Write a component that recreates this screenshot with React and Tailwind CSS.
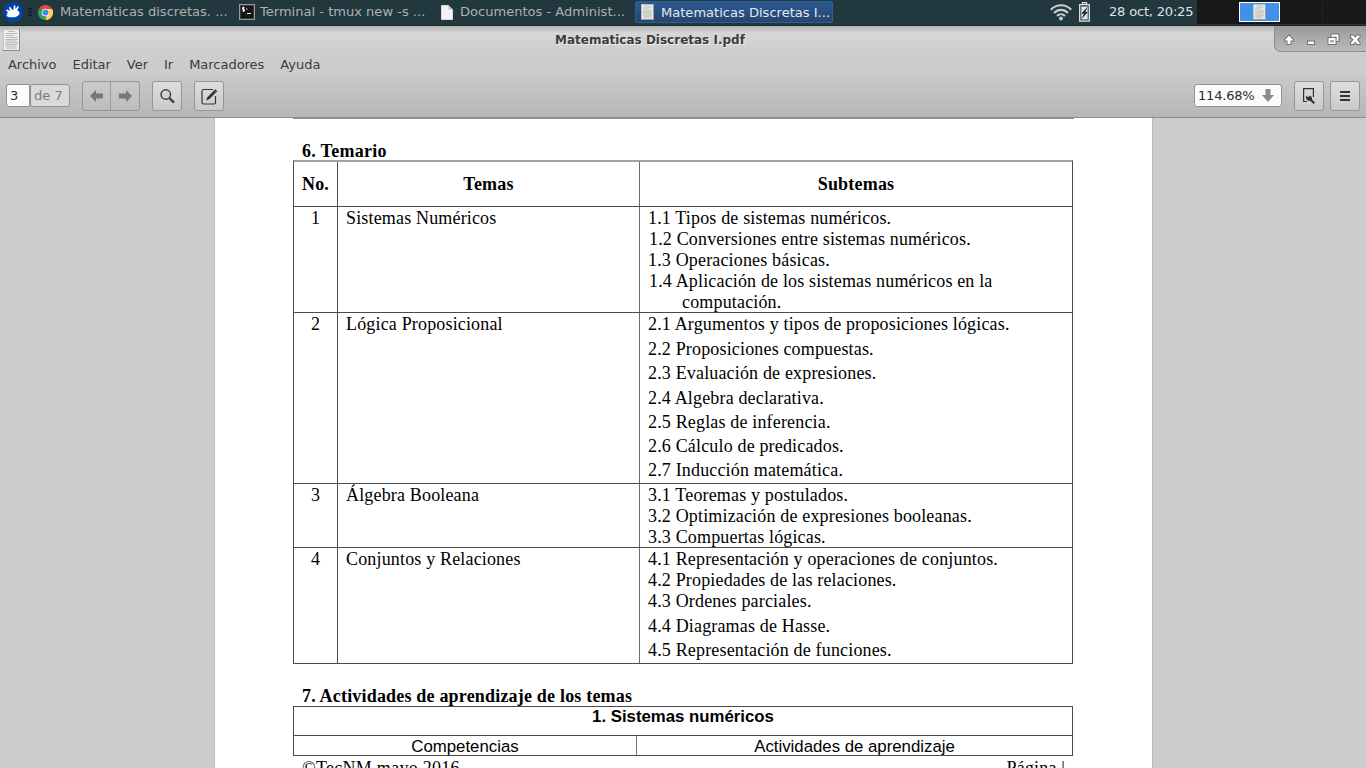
import React from "react";

// Una fila de texto del documento: alto de línea y espaciado propios
const Line = ({ className = "", children }) => (
  <div className={`whitespace-nowrap ${className}`}>{children}</div>
);

const DocIcon = ({ className = "" }) => (
  <svg viewBox="0 0 17 22" className={className} preserveAspectRatio="none">
    <rect x="0.5" y="0.5" width="16" height="21" fill="#ececea" stroke="#c4c4c2" />
    <path d="M16.500 0v21.500H0" fill="none" stroke="#8a8a8a" />
    <g stroke="#b4b4b4" strokeWidth="0.9">
      <path d="M5 2.5h7M3 4.5h11M3 6.5h8M2.500 8.500h12M2.500 10.500h12M2.500 12h11M2.500 13.700h12M2.500 15.400h12M2.500 17h10M3 19h11" />
    </g>
  </svg>
);

const XubuntuIcon = () => (
  <svg viewBox="0 0 20 20" className="ml-[3px] h-5 w-5">
    <circle cx="10" cy="10" r="10" fill="#0044aa" />
    <path
      d="M3.300 8.200C3.500 7.300 4.500 7.500 5.300 8L7.300 9L6 5.800C5.900 4.700 7.100 4.600 7.700 5.600L9.500 8L10.500 7.500L10.700 4C10.900 2.800 12.300 2.900 12.400 4L12.400 7L14.200 4.700C15 3.900 16 4.700 15.500 5.700L14.200 8.200C16 9.200 17.200 10.500 16.300 12.200C15.300 14.200 12 15.500 9 15.300C6.500 15.300 4.500 15 3.600 14C3.200 13 4 12.700 5 12.600C4 12.200 3.600 11.500 4.100 11C4.500 10.700 5.200 10.800 5.600 10.700L4 9.500C3.500 9.100 3.200 8.700 3.300 8.200Z"
      fill="#fff"
    />
  </svg>
);

const ChromeIcon = () => (
  <svg viewBox="0 0 16 16" className="h-[15px] w-[15px]">
    <path d="M8 8L1.070 4A8 8 0 0 1 14.930 4Z" fill="#e24a3b" />
    <path d="M8 8L14.930 4A8 8 0 0 1 8 16Z" fill="#fcd04b" />
    <path d="M8 8L8 16A8 8 0 0 1 1.070 4Z" fill="#2da05a" />
    <path d="M8 4.300h6.930A8 8 0 0 1 8 16l3.200-6.200Z" fill="#fcd04b" />
    <circle cx="8" cy="8" r="4.100" fill="#f4f4f4" />
    <circle cx="8" cy="8" r="3.200" fill="#4a87ee" />
  </svg>
);

const TerminalIcon = () => (
  <svg viewBox="0 0 16 16" className="h-4 w-4">
    <rect x="0.5" y="0.5" width="15" height="15" fill="#151515" stroke="#9a9a98" />
    <rect x="1.5" y="1.500" width="13" height="13" fill="none" stroke="#3b3b3b" />
    <path d="M5.500 3.500H3.500V5.200H5.500V7H3.300M4.500 2.700v5M7 5h1.500M8 9.500h4" stroke="#eee" fill="none" />
  </svg>
);

const FileIcon = () => (
  <svg viewBox="0 0 12 15" className="h-[15px] w-3">
    <path d="M0.500 0.500h7l4 4v10h-11z" fill="#f3f3f3" stroke="#d9d9d9" />
    <path d="M7.500 0.500v4h4z" fill="#bbb" />
  </svg>
);

const WifiIcon = () => (
  <svg viewBox="0 0 22 17" className="h-[17px] w-[22px]" fill="none" stroke="#c9cdcd" strokeWidth="2.100">
    <path d="M0.800 5.700C6.500 -0.300 15.500 -0.300 21.200 5.700" />
    <path d="M4 9C8 4.800 14 4.800 18 9" />
    <path d="M7 12C9.300 9.700 12.700 9.700 15 12" />
    <circle cx="11" cy="14.500" r="1.900" fill="#c9cdcd" stroke="none" />
  </svg>
);

const BatteryIcon = () => (
  <svg viewBox="0 0 11 20" className="h-5 w-[11px]">
    <path d="M3.500 2.500v-2h4v2M0.700 2.700h9.600v16.400H0.700z" fill="none" stroke="#e2e5e5" strokeWidth="1.300" />
    <rect x="2.300" y="4.500" width="6.400" height="13" fill="#dde1e1" />
    <path d="M8.500 5L2 11.800h2.800L2.500 17L9 10H6.500z" fill="#1b3037" />
  </svg>
);

const TASKS = [
  { label: "Matemáticas discretas. ...", width: "w-[201px]", icon: <ChromeIcon />, gap: "gap-[7px]" },
  { label: "Terminal - tmux new -s ...", width: "w-[202px]", icon: <TerminalIcon />, gap: "gap-[5px]" },
  { label: "Documentos - Administ...", width: "w-[194px]", icon: <FileIcon />, gap: "gap-[7px]" },
];

const Panel = () => (
  <header className="flex h-[26px] shrink-0 items-start border-b border-[#17262b] bg-[#22383f] text-[13.050px] text-[#acb1b2]">
    <div className="flex h-6 items-center">
      <XubuntuIcon />
      <div className="mr-[6px] ml-[5px] flex flex-col gap-px">
        <div className="h-[2px] w-1 bg-[#14252b]" />
        <div className="h-[2px] w-1 bg-[#14252b]" />
        <div className="h-[2px] w-1 bg-[#14252b]" />
      </div>
      {TASKS.map((t) => (
        <div key={t.label} className={`flex items-center whitespace-nowrap ${t.width} ${t.gap}`}>
          {t.icon}
          <span>{t.label}</span>
        </div>
      ))}
    </div>
    <div className="mt-px flex h-[22px] w-[198px] items-center gap-[7px] rounded-[2px] border border-[#2d6099] bg-linear-to-b from-[#2b5992] to-[#26466f] pl-[5px] whitespace-nowrap text-[#e3e8ee]">
      <DocIcon className="h-4 w-[13px]" />
      <span className="pt-px">Matematicas Discretas I...</span>
    </div>
    <div className="ml-auto flex h-6 items-center text-[#dfe2e3]">
      <WifiIcon />
      <div className="ml-[7px]"><BatteryIcon /></div>
      <span className="ml-[19px] w-[88px] tracking-[-0.200px] whitespace-nowrap">28 oct, 20:25</span>
      <div className="flex h-6 w-[169px] bg-[#181818] py-[2px] pl-[42px]">
        <div className="flex w-[41px] items-center justify-center border border-white bg-[#3f92e8]">
          <DocIcon className="h-4 w-[13px]" />
        </div>
        <div className="ml-px w-[42px] border-r border-[#222]" />
      </div>
    </div>
  </header>
);

const TitleBar = () => (
  <div className="flex h-[28px] shrink-0 bg-linear-to-b from-[#b3b3b3] via-[#d6d6d6] via-25% to-[#cdcdcd]">
    <div className="w-[650px] pt-[3px] pl-[3px]">
      <DocIcon className="h-[22px] w-[17px]" />
    </div>
    <div className="-ml-[95px] pt-[6px] text-[12px] leading-[16px] font-bold text-[#3c3c3c] [text-shadow:1px_1px_0_#eee]">
      Matematicas Discretas I.pdf
    </div>
    <div className="ml-auto h-[26px] w-[92px] rounded-bl-[7px] border-b border-l border-[#8c8c8c] bg-linear-to-b from-[#9a9a9a] to-[#bababa]">
      <svg viewBox="0 0 91 25" className="h-[25px] w-[91px] [paint-order:stroke]" fill="#fff" stroke="#707070" strokeWidth="2">
        <path d="M14 9.500L18 13.800V14.500H15.500V18H12.500V14.500H10V13.800Z" />
        <path d="M33 15.500h6v2.500h-6z" />
        <path d="M56.500 8.500h7v6.500h-7z" />
        <path d="M58.500 10.500h3v2.500h-3z" fill="#aaa" stroke="none" />
        <path d="M53.500 12h7v6h-7z" />
        <path d="M55 14h4v2.500h-4z" fill="#aaa" stroke="none" />
        <path d="M76 9.500h2.300l1.900 2.200l1.900-2.200H84.500v1.500l-2.600 2.700l2.600 2.800v1.500h-2.400l-1.900-2.200l-1.900 2.200H76v-1.500l2.600-2.800l-2.600-2.700z" />
      </svg>
    </div>
  </div>
);

const ToolButton = ({ children, className = "" }) => (
  <button className={`flex h-[30px] w-[30px] items-center justify-center rounded-[3px] border border-[#969696] bg-linear-to-b from-[#dedede] to-[#cacaca] ${className}`}>
    {children}
  </button>
);

const Arrow = ({ className = "" }) => (
  <svg viewBox="0 0 13 12" className={`h-3 w-[13px] ${className}`} fill="#777">
    <path d="M6 0v3.500h7v5H6V12L0 6z" />
  </svg>
);

const Toolbar = () => (
  <div className="flex h-[43px] shrink-0 items-start border-b border-[#8e8e8e] bg-linear-to-b from-[#cacaca] to-[#b6b6b6] pt-[6px] pr-[6px] pl-[6px] text-[13px]">
    <div className="mt-[3px] h-[23px] w-6 rounded-l-[3px] border border-[#929292] bg-[#fcfcfc] pl-[3px] leading-[22px] text-[#2b2b2b]">3</div>
    <div className="mt-[3px] h-[23px] w-10 rounded-[3px] border border-[#929292] bg-[#dadada] pl-[3px] leading-[22px] text-[#7b7b7b]">de 7</div>
    <div className="ml-3 flex h-[30px] w-[58px] items-center rounded-[3px] border border-[#969696] bg-linear-to-b from-[#cbcbcb] to-[#bcbcbc]">
      <div className="flex h-full w-[28px] items-center justify-center border-r border-[#9c9c9c]"><Arrow /></div>
      <div className="flex flex-1 items-center justify-center"><Arrow className="rotate-180" /></div>
    </div>
    <ToolButton className="ml-3">
      <svg viewBox="0 0 15 15" className="h-[15px] w-[15px]" fill="none" stroke="#3f3f3f">
        <circle cx="5.800" cy="5.500" r="4.700" strokeWidth="1.500" />
        <path d="M9.200 9L14 13.600" strokeWidth="2.400" />
      </svg>
    </ToolButton>
    <ToolButton className="ml-3">
      <svg viewBox="0 0 17 17" className="h-[17px] w-[17px]" fill="none" stroke="#333">
        <path d="M12 1.500H2.500Q1 1.500 1 3V14.500Q1 16 2.500 16H13Q14.500 16 14.500 14.500V8" strokeWidth="1.200" />
        <path d="M5 12.500L6.500 9L13 2.500L15 4.500L8.500 11Z" fill="#333" stroke="none" />
        <path d="M13.700 1.800L15.700 3.800" strokeWidth="1.800" />
      </svg>
    </ToolButton>
    <div className="mt-[3px] ml-auto flex h-[23px] w-[88px] items-center rounded-[3px] border border-[#929292] bg-[#fbfbfb] pl-[3px] text-[#2d2d2d]">
      <span className="w-[64px] tracking-[-0.200px]">114.68%</span>
      <svg viewBox="0 0 12 13" className="h-[13px] w-3" fill="#8b8b8b"><path d="M3.500 0h5v6H12L6 13L0 6h3.500z" /></svg>
    </div>
    <ToolButton className="ml-3">
      <svg viewBox="0 0 12 16" className="h-4 w-3" fill="none" stroke="#333">
        <path d="M4 13.500H0.600V0.600H10.400V9" strokeWidth="1.200" />
        <path d="M3 7.500L5 9.300L7 7.500L9 9.500L9 11.500L12 14.500L10.500 16L7.500 13L5 12.700L3 10.500Z" fill="#333" stroke="none" />
      </svg>
    </ToolButton>
    <ToolButton className="ml-[6px]">
      <div className="h-[10px] w-[10px] border-y-2 border-[#333] py-[2px]"><div className="h-[2px] bg-[#333]" /></div>
    </ToolButton>
  </div>
);

const ROWS = [
  {
    no: "1",
    tema: "Sistemas Numéricos",
    height: "h-[106px]",
    lines: [
      ["1.1 Tipos de sistemas numéricos.", "leading-[21px]"],
      ["1.2 Conversiones entre sistemas numéricos.", "leading-[21px] pl-px"],
      ["1.3 Operaciones básicas.", "leading-[21px]"],
      ["1.4 Aplicación de los sistemas numéricos en la", "leading-[21px] pl-px"],
      ["computación.", "leading-[21px] pl-[34px]"],
    ],
  },
  {
    no: "2",
    tema: "Lógica Proposicional",
    height: "h-[171px]",
    lines: [
      ["2.1 Argumentos y tipos de proposiciones lógicas.", "leading-[21px] mb-[2px]"],
      ["2.2 Proposiciones compuestas.", "leading-[24.300px]"],
      ["2.3 Evaluación de expresiones.", "leading-[24.300px]"],
      ["2.4 Algebra declarativa.", "leading-[24.300px]"],
      ["2.5 Reglas de inferencia.", "leading-[24.300px]"],
      ["2.6 Cálculo de predicados.", "leading-[24.300px]"],
      ["2.7 Inducción matemática.", "leading-[24.300px]"],
    ],
  },
  {
    no: "3",
    tema: "Álgebra Booleana",
    height: "h-[64px]",
    lines: [
      ["3.1 Teoremas y postulados.", "leading-[21px]"],
      ["3.2 Optimización de expresiones booleanas.", "leading-[21px]"],
      ["3.3 Compuertas lógicas.", "leading-[21px]"],
    ],
  },
  {
    no: "4",
    tema: "Conjuntos y Relaciones",
    height: "h-[116px]",
    lines: [
      ["4.1 Representación y operaciones de conjuntos.", "leading-[21px]"],
      ["4.2 Propiedades de las relaciones.", "leading-[21px]"],
      ["4.3 Ordenes parciales.", "leading-[21px] mb-[2px]"],
      ["4.4 Diagramas de Hasse.", "leading-[24.300px]"],
      ["4.5 Representación de funciones.", "leading-[24.300px]"],
    ],
  },
];

const Page = () => (
  <div className="h-[650px] w-[939px] shrink-0 border-x border-[#bababa] bg-white px-[78px] font-['Liberation_Serif',serif] text-[18px] tracking-[0.165px] text-black">
    <div className="h-px w-[781px] bg-[#8e8e8e]" />
    <h2 className="mt-[22px] h-[19px] pl-[9px] leading-[21px] font-bold tracking-[0.280px] whitespace-nowrap">6. Temario</h2>
    <div className="w-[780px] border-x border-t-2 border-x-[#4a4a4a] border-t-[#a3a3a3]">
      <div className="flex h-[45px] border-b border-[#4a4a4a] text-center leading-[44px] font-bold tracking-[0.200px]">
        <div className="w-[44px] border-r border-[#4a4a4a]">No.</div>
        <div className="w-[302px] border-r border-[#6a6a6a]">Temas</div>
        <div className="flex-1">Subtemas</div>
      </div>
      {ROWS.map((row) => (
        <div key={row.no} className={`flex border-b border-[#4a4a4a] leading-[21px] ${row.height}`}>
          <div className="w-[44px] border-r border-[#4a4a4a] pt-px text-center">{row.no}</div>
          <div className="w-[302px] border-r border-[#6a6a6a] pt-px pl-2">{row.tema}</div>
          <div className="flex-1 pt-px pl-2">
            {row.lines.map(([text, cls]) => (
              <Line key={text} className={cls}>{text}</Line>
            ))}
          </div>
        </div>
      ))}
    </div>
    <h2 className="mt-[22px] h-[20px] pl-[9px] leading-[20px] font-bold tracking-[0.190px] whitespace-nowrap">7. Actividades de aprendizaje de los temas</h2>
    <div className="w-[780px] border border-[#4a4a4a] text-center font-['Liberation_Sans',sans-serif] text-[16.800px] tracking-normal">
      <div className="h-[29px] border-b border-[#4a4a4a] leading-[19px] font-bold">1. Sistemas numéricos</div>
      <div className="flex h-[19px] leading-[21px]">
        <div className="w-[343px] border-r border-[#777]">Competencias</div>
        <div className="flex-1">Actividades de aprendizaje</div>
      </div>
    </div>
    <div className="flex justify-between pt-[2px] pr-[9px] pl-[9px] leading-[20px]">
      <span className="tracking-[0.280px]">©TecNM mayo 2016</span>
      <span>Página |</span>
    </div>
  </div>
);

export default function App() {
  return (
    <div className="flex h-[768px] w-[1366px] flex-col overflow-hidden bg-[#cdcdcd] font-['DejaVu_Sans',sans-serif]">
      <Panel />
      <TitleBar />
      <nav className="flex h-[21px] shrink-0 items-center gap-4 bg-[#cdcdcd] pl-2 text-[13px] tracking-[-0.020px] text-[#3c3c3c]">
        {["Archivo", "Editar", "Ver", "Ir", "Marcadores", "Ayuda"].map((m) => (
          <span key={m}>{m}</span>
        ))}
      </nav>
      <Toolbar />
      <main className="flex min-h-0 flex-1 pl-[214px]">
        <Page />
      </main>
    </div>
  );
}
